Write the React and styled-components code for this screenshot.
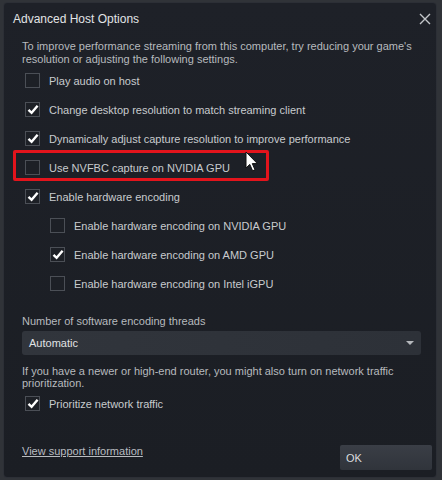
import React from "react";
import styled, { createGlobalStyle } from "styled-components";

const GlobalStyle = createGlobalStyle`
  html, body {
    margin: 0;
    padding: 0;
    background: #303338;
    font-family: "Liberation Sans", Arial, sans-serif;
  }
`;

const Dialog = styled.div`
  box-sizing: border-box;
  width: 434px;
  height: 476px;
  margin: 2px 5px 0 3px;
  background: linear-gradient(180deg, #1e2128 0%, #1b1e24 100%);
  border: 1px solid #2c2f36;
  border-radius: 4px;
  display: flex;
  flex-direction: column;
`;

const Header = styled.div`
  height: 31px;
  display: flex;
  align-items: center;
  justify-content: space-between;
  padding: 0 4px 0 9px;
`;

const Title = styled.div`
  font-size: 12px;
  color: #e2e4e6;
`;

const CloseButton = styled.div`
  width: 14px;
  height: 14px;
  display: flex;
  align-items: center;
  justify-content: center;
`;

const Body = styled.div`
  flex: 1;
  display: flex;
  flex-direction: column;
  padding: 6px 15px 0 18px;
`;

const Text = styled.p`
  margin: ${(p) => p.$mt || 0}px 0 0;
  font-size: 11px;
  line-height: ${(p) => p.$lh || 13}px;
  color: #b7babe;
`;

const Row = styled.div`
  position: relative;
  height: 29px;
  display: flex;
  align-items: center;
  gap: 9px;
  padding-left: ${(p) => (p.$sub ? 28 : 3)}px;
  margin-top: ${(p) => p.$mt || 0}px;

  ${(p) =>
    p.$highlight &&
    `
    &::before {
      content: "";
      position: absolute;
      left: -9px;
      top: -3px;
      width: 250px;
      height: 25px;
      border: 3px solid #e3141c;
      border-radius: 2px;
    }
  `}
`;

const Box = styled.span`
  box-sizing: border-box;
  width: 15px;
  height: 15px;
  border: 1px solid #4b4f56;
  background: #1d2026;
  display: flex;
  align-items: center;
  justify-content: center;
`;

const Label = styled.span`
  font-size: 11px;
  color: #c8cbce;
`;

const Cursor = styled.svg`
  position: absolute;
  left: 223px;
  top: -2px;
`;

const Select = styled.div`
  box-sizing: border-box;
  height: 24px;
  margin-top: 3px;
  display: flex;
  align-items: center;
  justify-content: space-between;
  padding: 0 7px 0 7px;
  background: linear-gradient(90deg, #31353c 0%, #2d3138 100%);
  border-radius: 3px;
  font-size: 11px;
  color: #e0e2e4;
`;

const Arrow = styled.span`
  width: 0;
  height: 0;
  border-left: 4px solid transparent;
  border-right: 4px solid transparent;
  border-top: 4px solid #b5b8bc;
`;

const Footer = styled.div`
  display: flex;
  justify-content: space-between;
  align-items: flex-start;
  padding: 0 4px 7px 18px;
`;

const Link = styled.a`
  font-size: 11px;
  line-height: 13px;
  color: #b9bcc0;
  text-decoration: underline;
  margin-top: 0;
`;

const OkButton = styled.div`
  box-sizing: border-box;
  width: 92px;
  height: 25px;
  display: flex;
  align-items: center;
  padding-left: 6px;
  background: linear-gradient(180deg, #3a3e46 0%, #30343b 100%);
  border-radius: 2px;
  font-size: 11px;
  color: #dadcdf;
`;

const Check = () => (
  <svg width="12" height="11" viewBox="0 0 12 11">
    <path d="M1.5 5.8 L4.6 8.8 L10.6 1.8" fill="none" stroke="#fff" strokeWidth="2.4" />
  </svg>
);

const Option = ({ checked, sub, highlight, children }) => (
  <Row $sub={sub} $highlight={highlight}>
    <Box>{checked && <Check />}</Box>
    <Label>{children}</Label>
    {highlight && (
      <Cursor width="14" height="22" viewBox="0 0 14 22">
        <path
          d="M1 1 L1 17 L4.8 13.4 L7.6 19.8 L10 18.8 L7.3 12.6 L12.4 12.6 Z"
          fill="#fff"
          stroke="#111"
          strokeWidth="1"
        />
      </Cursor>
    )}
  </Row>
);

const options = [
  { label: "Play audio on host" },
  { label: "Change desktop resolution to match streaming client", checked: true },
  { label: "Dynamically adjust capture resolution to improve performance", checked: true },
  { label: "Use NVFBC capture on NVIDIA GPU", highlight: true },
  { label: "Enable hardware encoding", checked: true },
  { label: "Enable hardware encoding on NVIDIA GPU", sub: true },
  { label: "Enable hardware encoding on AMD GPU", sub: true, checked: true },
  { label: "Enable hardware encoding on Intel iGPU", sub: true },
];

export default function App() {
  return (
    <>
      <GlobalStyle />
      <Dialog>
        <Header>
          <Title>Advanced Host Options</Title>
          <CloseButton>
            <svg width="12" height="12" viewBox="0 0 12 12">
              <path d="M1 1 L11 11 M11 1 L1 11" stroke="#c3c6ca" strokeWidth="1.4" />
            </svg>
          </CloseButton>
        </Header>
        <Body>
          <Text>
            To improve performance streaming from this computer, try reducing your game's
            resolution or adjusting the following settings.
          </Text>
          {options.map((o) => (
            <Option key={o.label} checked={o.checked} sub={o.sub} highlight={o.highlight}>
              {o.label}
            </Option>
          ))}
          <Text $mt={17}>Number of software encoding threads</Text>
          <Select>
            <span>Automatic</span>
            <Arrow />
          </Select>
          <Text $mt={10} $lh={12}>
            If you have a newer or high-end router, you might also turn on network traffic
            prioritization.
          </Text>
          <Option checked>Prioritize network traffic</Option>
        </Body>
        <Footer>
          <Link>View support information</Link>
          <OkButton>OK</OkButton>
        </Footer>
      </Dialog>
    </>
  );
}
